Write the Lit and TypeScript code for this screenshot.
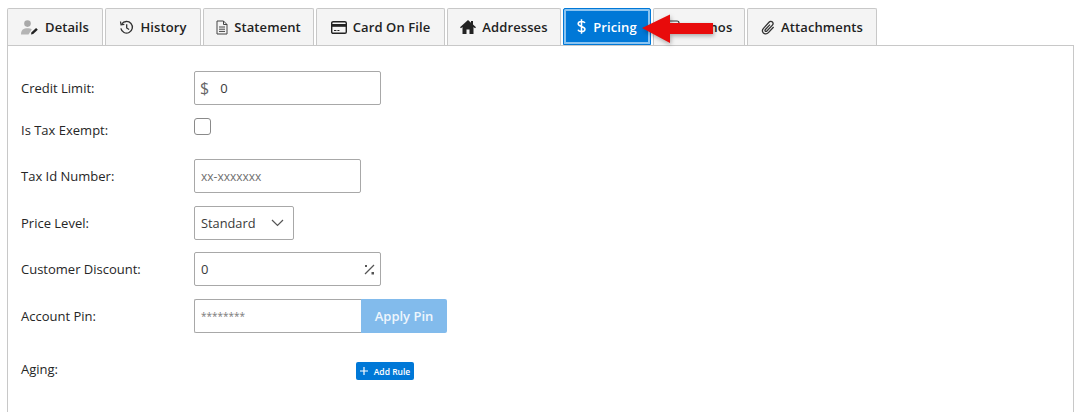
import { LitElement, html, css, svg } from "lit";
import { customElement } from "lit/decorators.js";

const icons: Record<string, unknown> = {
  details: svg`<svg class="ic" width="18" height="15" viewBox="0 0 18 15"><circle cx="6.500" cy="3.600" r="3.300" fill="#a8a8a8"/><path d="M0 14.500c0-4.700 2.500-6.200 6.500-6.200 1.800 0 3.200.3 4.300 1.100L7.500 14.500z" fill="#b4b4b4"/><path d="M10 14.500l.5-2.200 4.600-4.300 1.700 1.700-4.600 4.300z" fill="#222"/></svg>`,
  history: svg`<svg class="ic" width="15" height="15" viewBox="0 0 16 16" fill="none" stroke="#333" stroke-width="1.400"><path d="M3 4.200A6.200 6.200 0 1 1 2 9"/><path d="M1.600 1.600l.6 3.600 3.500-.5" stroke-width="1.300"/><path d="M8.200 4.500v4l2.600 1.600"/></svg>`,
  statement: svg`<svg class="ic" width="12" height="15" viewBox="0 0 12 15" fill="none" stroke="#444" stroke-width="1"><path d="M1 1h6.500L11 4.500V14H1z"/><path d="M7.500 1v3.500H11M3 7h6M3 9.200h6M3 11.400h6"/></svg>`,
  card: svg`<svg class="ic" width="16" height="13" viewBox="0 0 16 13"><rect x=".7" y=".7" width="14.600" height="11.600" rx="1.400" fill="none" stroke="#222" stroke-width="1.400"/><rect x="1" y="3" width="14" height="2.800" fill="#222"/><path d="M3 9.500h2.400M6.400 9.500h2" stroke="#222" stroke-width="1.200"/></svg>`,
  home: svg`<svg class="ic" width="16" height="14" viewBox="0 0 16 14"><path d="M8 0L0 7.200l1 1.100L2.500 7v7h4V9.500h3V14h4V7L15 8.300l1-1.100-3-2.700V1h-2v1.700z" fill="#222"/></svg>`,
  dollar: svg`<svg class="ic" width="9" height="15" viewBox="0 0 10 16" fill="none" stroke="#fff" stroke-width="1.700"><path d="M8.800 4.200C8.300 3 7 2.400 5 2.400 2.700 2.400 1.300 3.400 1.300 5c0 3.800 7.500 2.200 7.500 6 0 1.600-1.500 2.600-3.800 2.600-2.100 0-3.400-.7-3.900-2M5 0v16"/></svg>`,
  memo: svg`<svg class="ic" width="14" height="14" viewBox="0 0 14 14" fill="none" stroke="#333" stroke-width="1.200"><rect x="1" y="1" width="12" height="12" rx="2"/></svg>`,
  clip: svg`<svg class="ic" width="14" height="15" viewBox="0 0 14 15" fill="none" stroke="#333" stroke-width="1.300"><path d="M12.600 7l-5.200 5.600c-1.500 1.600-3.700 1.700-5 .4s-1.200-3.300.3-4.900L8 2.300c1-1.100 2.500-1.200 3.400-.3s.8 2.300-.2 3.400L5.900 11c-.5.5-1.200.6-1.600.2s-.4-1.100.1-1.700L9 4.600"/></svg>`,
};

const tabs = [
  ["Details", "details"],
  ["History", "history"],
  ["Statement", "statement"],
  ["Card On File", "card"],
  ["Addresses", "home"],
  ["Pricing", "dollar"],
  ["Memos", "memo"],
  ["Attachments", "clip"],
];

@customElement("app-root")
export class AppRoot extends LitElement {
  static styles = css`
    :host {
      display: block;
      position: relative;
      width: 1080px;
      height: 412px;
      overflow: hidden;
      background: #fff;
      font-family: "Open Sans", "Noto Sans", sans-serif;
      font-size: 13px;
      color: #323130;
      box-sizing: border-box;
      padding: 8px 6px 0 7px;
    }
    .tabs {
      display: grid;
      grid-template-columns: 96px 96px 111px 129px 114px 88px 92px 130px;
      column-gap: 2px;
      width: max-content;
      height: 37px;
    }
    .tab {
      display: flex;
      align-items: center;
      justify-content: center;
      gap: 6px;
      box-sizing: border-box;
      background: #f4f4f4;
      border: 1px solid #c8c8c8;
      border-bottom: none;
      border-radius: 2px 2px 0 0;
      font-weight: 600;
      font-size: 13px;
      letter-spacing: 0.1px;
      color: #222;
    }
    .tab.active {
      background: #0078d7;
      color: #fff;
      border: 1px solid #0078d7;
      box-shadow: inset 0 0 0 2px #8cc4f0;
      gap: 7px;
    }
    .ic { flex: none; display: block; }
    .panel {
      box-sizing: border-box;
      height: 367px;
      border: 1px solid #c8c8c8;
      border-bottom: none;
      padding: 25px 13px 0;
    }
    .row {
      display: grid;
      grid-template-columns: 173px 1fr;
      align-items: center;
      height: 34px;
      margin-bottom: 13px;
    }
    .row.price { margin-bottom: 12px; }
    .row.check { height: 28px; align-items: start; }
    .row.check label { padding-top: 3px; }
    label { font-size: 13px; color: #262626; }
    .field {
      box-sizing: border-box;
      display: flex;
      align-items: center;
      height: 34px;
      background: #fff;
      border: 1px solid #a8a8a8;
      border-radius: 2px;
      padding: 0 6px;
      font-size: 13px;
      color: #3a3a3a;
    }
    .w187 { width: 187px; }
    .w167 { width: 167px; }
    .w100 { width: 100px; }
    .cur { font-size: 16px; color: #666; margin-right: 11px; margin-left: -1px; }
    .ph { color: #6f6f6f; font-size: 12px; }
    .std { font-size: 12.800px; }
    .box {
      box-sizing: border-box;
      width: 17px;
      height: 17px;
      border: 1px solid #8a8a8a;
      border-radius: 3px;
      background: #fff;
    }
    .between { justify-content: space-between; }
    .group { display: flex; }
    .group .field {
      border-radius: 2px 0 0 2px;
      border-right: none;
      color: #7a7a7a;
      font-size: 10px;
    }
    .apply {
      box-sizing: border-box;
      width: 86px;
      height: 34px;
      display: flex;
      align-items: center;
      justify-content: center;
      background: #82bbec;
      color: #eef6fd;
      border-radius: 0 2px 2px 0;
      font-weight: 600;
      font-size: 13px;
    }
    .aging {
      display: grid;
      grid-template-columns: 335px auto;
      align-items: center;
      height: 18px;
      margin-top: 27px;
    }
    .aging label { margin-bottom: 4px; }
    .add {
      display: flex;
      align-items: center;
      justify-content: center;
      gap: 6px;
      box-sizing: border-box;
      width: 58px;
      height: 18px;
      background: #0078d7;
      border-radius: 2px;
      color: #fff;
      font-size: 8.500px;
      font-weight: 600;
    }
    .arrow {
      position: absolute;
      left: 640px;
      top: 10px;
      filter: drop-shadow(1px 2px 2px rgba(0, 0, 0, 0.3));
    }
  `;

  render() {
    return html`
      <div class="tabs">
        ${tabs.map(
          ([t, i]) => html`<div class="tab ${t === "Pricing" ? "active" : ""}">${icons[i]}<span>${t}</span></div>`
        )}
      </div>
      <div class="panel">
        <div class="row">
          <label>Credit Limit:</label>
          <div class="field w187"><span class="cur">$</span>0</div>
        </div>
        <div class="row check">
          <label>Is Tax Exempt:</label>
          <div class="box"></div>
        </div>
        <div class="row">
          <label>Tax Id Number:</label>
          <div class="field w167"><span class="ph">xx-xxxxxxx</span></div>
        </div>
        <div class="row price">
          <label>Price Level:</label>
          <div class="field w100 between">
            <span class="std">Standard</span>
            <svg width="13" height="8" viewBox="0 0 13 8" fill="none" stroke="#555" stroke-width="1.200" style="margin-right:3px"><path d="M1 1l5.500 5.500L12 1"/></svg>
          </div>
        </div>
        <div class="row">
          <label>Customer Discount:</label>
          <div class="field w187 between">
            <span>0</span>
            <svg width="11" height="11" viewBox="0 0 11 11" fill="none" stroke="#555" style="margin-right:-1px"><path d="M10 1L1 10" stroke-width="1.300"/><rect x="1" y="1" width="2" height="2" fill="#555" stroke="none"/><rect x="7.500" y="8" width="2.500" height="2.500" fill="#555" stroke="none"/></svg>
          </div>
        </div>
        <div class="row">
          <label>Account Pin:</label>
          <div class="group">
            <div class="field w167">********</div>
            <div class="apply">Apply Pin</div>
          </div>
        </div>
        <div class="aging">
          <label>Aging:</label>
          <div class="add">
            <svg width="8" height="8" viewBox="0 0 8 8" stroke="#fff" stroke-width="1.200"><path d="M4 0v8M0 4h8"/></svg>
            <span>Add Rule</span>
          </div>
        </div>
      </div>
      <svg class="arrow" width="80" height="40" viewBox="0 0 80 40">
        <path d="M2 18L30 4.500V13h43v11H30v9z" fill="#e80b0b"/>
      </svg>
    `;
  }
}
